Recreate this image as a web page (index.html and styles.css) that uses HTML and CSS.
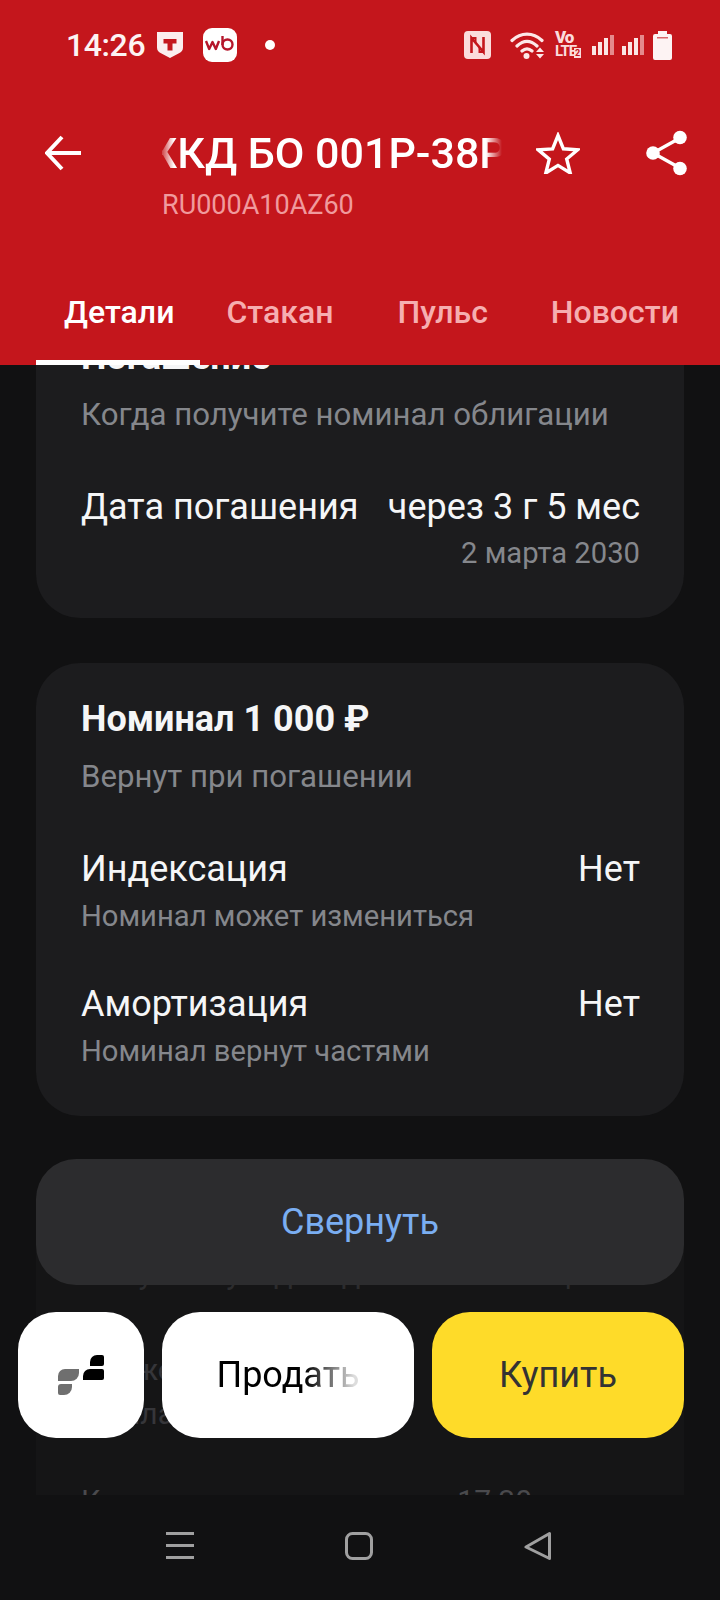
FILE: index.html
```html
<!DOCTYPE html>
<html lang="ru">
<head>
  <meta charset="UTF-8">
  <meta name="viewport" content="width=device-width, initial-scale=1.0">
  <title>ЖКД БО 001Р-38Р</title>
  <link rel="stylesheet" href="styles.css">
</head>
<body>
  <div class="phone">
    <header class="top">
      <div class="status">
        <span class="time">14:26</span>
        <svg class="ic-bank" width="26" height="26" viewBox="0 0 26 26"><path d="M0 0h26v15.500c0 3-1.500 4.500-4 5.700L13 26l-9-4.800C1.500 20 0 18.500 0 15.500z" fill="#fbeeee"/><path d="M6.500 7h13v4.500h-4v7h-5v-7h-4z" fill="#c4161c"/></svg>
        <svg class="ic-wb" width="34" height="34" viewBox="0 0 34 34"><rect width="34" height="34" rx="9" fill="#fff"/><path d="M3 13l3.200 8 3.300-7 3.300 7 3.200-8" fill="none" stroke="#b5162b" stroke-width="2.400" stroke-linejoin="round"/><circle cx="24.500" cy="16.500" r="5" fill="none" stroke="#b5162b" stroke-width="2.400"/><path d="M19.500 8v9" stroke="#b5162b" stroke-width="2.400"/></svg>
        <span class="dot"></span>
        <span class="status-right">
          <svg width="27" height="28" viewBox="0 0 27 28"><rect width="27" height="28" rx="4" fill="#fbdcdc"/><path d="M7.500 22V7l12 14V6" fill="none" stroke="#c4161c" stroke-width="2.600"/><path d="M7.500 7h4v5M19.500 21h-4v-5" fill="none" stroke="#c4161c" stroke-width="2"/></svg>
          <svg class="ic-wifi" width="34" height="28" viewBox="0 0 34 28"><path d="M2 9.500C11 1 23 1 32 9.500M7 15c6.500-6 13.500-6 20 0M12 20c3.500-3 6.500-3 10 0" fill="none" stroke="#fde8e8" stroke-width="3.200" stroke-linecap="round"/><circle cx="16.500" cy="25" r="3" fill="#fde8e8"/><path d="M26 21l4-4.500 4 4.500zM26 23h8l-4 4.500z" fill="#fde8e8"/></svg>
          <span class="volte"><b>Vo</b><br><span>LTE</span><i>2</i></span>
          <svg class="ic-signal" width="22" height="20" viewBox="0 0 22 20"><path d="M0 11h4v9H0zM6 7h4v13H6zM12 3h4v17h-4z" fill="#fbe6e6"/><path d="M18 0h4v20h-4z" fill="#e58a8d"/></svg>
          <svg class="ic-signal2" width="22" height="20" viewBox="0 0 22 20"><path d="M0 11h4v9H0zM6 7h4v13H6zM12 3h4v17h-4z" fill="#fbe6e6"/><path d="M18 0h4v20h-4z" fill="#e58a8d"/></svg>
          <svg class="ic-batt" width="19" height="29" viewBox="0 0 19 29"><path d="M5 0h9v3h3a2 2 0 0 1 2 2v22a2 2 0 0 1-2 2H2a2 2 0 0 1-2-2V5a2 2 0 0 1 2-2h3z" fill="#fdf3f3"/><path d="M4 6h11v1.500H4z" fill="#d9666a"/></svg>
        </span>
      </div>

      <div class="toolbar">
        <svg class="ic-back" width="36" height="36" viewBox="0 0 36 36"><path d="M17 2L2 18l15 16M2 18h34" fill="none" stroke="#fff" stroke-width="4"/></svg>
        <div class="titles">
          <div class="title-clip"><div class="title">ЖКД БО 001Р-38Р</div></div>
          <div class="isin">RU000A10AZ60</div>
        </div>
        <svg class="ic-star" width="44" height="42" viewBox="0 0 44 42"><path d="M22 3.500l5.400 13.300 14.300 1-11 9.200 3.500 13.900L22 33.400 9.800 41l3.500-13.900-11-9.200 14.300-1z" fill="none" stroke="#fff" stroke-width="3.400"/></svg>
        <svg class="ic-share" width="42" height="46" viewBox="0 0 42 46"><path d="M34 8L7 23l27 15" fill="none" stroke="#fff" stroke-width="3.400"/><circle cx="34" cy="7.500" r="6.800" fill="#fff"/><circle cx="7" cy="23" r="6.800" fill="#fff"/><circle cx="34" cy="38.500" r="6.800" fill="#fff"/></svg>
      </div>

      <nav class="tabs">
        <a class="tab active">Детали</a>
        <a class="tab">Стакан</a>
        <a class="tab">Пульс</a>
        <a class="tab">Новости</a>
        <span class="indicator"></span>
      </nav>
    </header>

    <main class="content">
      <section class="card first">
        <h2>Погашение</h2>
        <p class="hint">Когда получите номинал облигации</p>
        <div class="row">
          <span>Дата погашения</span>
          <span>через 3 г 5 мес</span>
        </div>
        <p class="hint small right">2 марта 2030</p>
      </section>

      <section class="card">
        <h2>Номинал 1 000 ₽</h2>
        <p class="hint">Вернут при погашении</p>
        <div class="row">
          <span>Индексация</span>
          <span>Нет</span>
        </div>
        <p class="hint small tight">Номинал может измениться</p>
        <div class="row">
          <span>Амортизация</span>
          <span>Нет</span>
        </div>
        <p class="hint small tight">Номинал вернут частями</p>
      </section>

      <section class="card ghost">
        <p class="ghost-lead">Получаемую доходность облигации</p>
        <p class="ghost-line">Снижение</p>
        <p class="ghost-line">Выплата</p>
        <div class="ghost-row"><span>Купить до</span><span>17:30</span></div>
      </section>

      <button class="collapse">Свернуть</button>

      <div class="actions">
        <button class="btn logo">
          <svg width="46" height="40" viewBox="0 0 46 40"><path d="M39 0h5a2 2 0 0 1 2 2v7a2 2 0 0 1-2 2h-12v-4a7 7 0 0 1 7-7z" fill="#000"/><path d="M32 14h12a2 2 0 0 1 2 2v7a2 2 0 0 1-2 2H25v-4a7 7 0 0 1 7-7z" fill="#000"/><path d="M7 14h14v4a8 8 0 0 1-8 8H0v-5a7 7 0 0 1 7-7z" fill="#6f6f6f"/><path d="M3 29h11v3a8 8 0 0 1-8 8H2a2 2 0 0 1-2-2v-6a3 3 0 0 1 3-3z" fill="#6f6f6f"/></svg>
        </button>
        <button class="btn sell"><span>Продать</span></button>
        <button class="btn buy">Купить</button>
      </div>
    </main>

    <footer class="navbar">
      <svg width="28" height="27" viewBox="0 0 28 27"><path d="M0 1.500h28M0 13.500h28M0 25.500h28" stroke="#a0a0a0" stroke-width="3"/></svg>
      <svg width="28" height="28" viewBox="0 0 28 28"><rect x="1.500" y="1.500" width="25" height="25" rx="6" fill="none" stroke="#a0a0a0" stroke-width="3"/></svg>
      <svg width="28" height="30" viewBox="0 0 28 30"><path d="M25.500 2.500v25L2 16z" fill="none" stroke="#a0a0a0" stroke-width="3" stroke-linejoin="round"/></svg>
    </footer>
  </div>
</body>
</html>
```

FILE: styles.css
```css
* {
  box-sizing: border-box;
}
body {
  margin: 0;
  background: #111112;
  font-family: Roboto, "Noto Sans", sans-serif;
  color: #f5f6f7;
}
.phone {
  width: 720px;
  height: 1600px;
  display: flex;
  flex-direction: column;
  overflow: hidden;
}

/* red header */
.top {
  height: 365px;
  flex: none;
  background: #c4161c;
  position: relative;
  z-index: 2;
  color: #fff;
}
.status {
  height: 90px;
  display: flex;
  align-items: center;
  padding-left: 66px;
}
.time {
  font-size: 32px;
  font-weight: 500;
  letter-spacing: -0.4px;
  width: 91px;
  color: #fdf3f3;
}
.ic-bank {
  margin-top: -1px;
}
.ic-wb {
  margin-left: 20px;
}
.dot {
  width: 10px;
  height: 10px;
  border-radius: 50%;
  background: #fff;
  margin-left: 28px;
}
.status-right {
  margin-left: auto;
  margin-right: 48px;
  display: flex;
  align-items: center;
}
.ic-wifi {
  margin-left: 19px;
}
.volte {
  margin-left: 11px;
  font-size: 15px;
  line-height: 13px;
  font-weight: 700;
  width: 28px;
  color: #fbdcdc;
  white-space: nowrap;
}
.volte span {
  display: inline-block;
  width: 19px;
  letter-spacing: -1px;
}
.volte b {
  font-size: 17px;
  letter-spacing: -1px;
}
.volte i {
  font-style: normal;
  font-size: 9px;
  background: #fbdcdc;
  color: #c4161c;
  padding: 0 1px;
}
.ic-signal {
  margin-left: 9px;
}
.ic-signal2 {
  margin-left: 8px;
}
.ic-batt {
  margin-left: 9px;
}

.toolbar {
  height: 165px;
  display: flex;
  align-items: flex-start;
  padding-left: 45px;
  padding-top: 40px;
}
.ic-back {
  margin-top: 5px;
}
.titles {
  width: 342px;
  margin-left: 81px;
  margin-top: -3px;
}
.title-clip {
  height: 52px;
  overflow: hidden;
  -webkit-mask-image: linear-gradient(90deg, rgba(0,0,0,0.2), #000 12px, #000 324px, transparent 340px);
  mask-image: linear-gradient(90deg, rgba(0,0,0,0.2), #000 12px, #000 324px, transparent 340px);
}
.title {
  font-size: 43px;
  line-height: 52px;
  font-weight: 500;
  white-space: nowrap;
  margin-left: -26px;
}
.isin {
  margin-top: 8px;
  font-size: 27px;
  line-height: 36px;
  color: #f09a9d;
}
.ic-star {
  margin-left: 32px;
  margin-top: 2px;
}
.ic-share {
  margin-left: 66px;
}

.tabs {
  position: relative;
  height: 110px;
  display: flex;
  padding-left: 64px;
  padding-top: 32px;
}
.tab {
  font-size: 32px;
  line-height: 50px;
  font-weight: 500;
  color: #f6aeb0;
}
.tab.active {
  color: #fff;
}
.tab:nth-child(2) {
  margin-left: 52px;
}
.tab:nth-child(3) {
  margin-left: 64px;
}
.tab:nth-child(4) {
  margin-left: 63px;
}
.indicator {
  position: absolute;
  left: 36px;
  bottom: 0;
  width: 164px;
  height: 5px;
  background: #fff;
}

/* scrolled content */
.content {
  flex: 1;
  position: relative;
  overflow: hidden;
  padding: 0 36px;
}
.card {
  background: #1c1c1e;
  border-radius: 44px;
  padding: 36px 44px 0 45px;
  margin-bottom: 45px;
  height: 453px;
}
.card.first {
  margin-top: -60px;
  height: 313px;
  padding-top: 32px;
}
h2 {
  margin: 0;
  font-size: 36px;
  line-height: 40px;
  font-weight: 700;
}
.hint {
  margin: 0;
  font-size: 31.2px;
  line-height: 36px;
  color: #85878c;
}
.hint.small {
  font-size: 29.2px;
}
h2 + .hint {
  margin-top: 20px;
}
.hint.right {
  text-align: right;
  margin-top: 8px;
}
.row {
  display: flex;
  justify-content: space-between;
  font-size: 36px;
  line-height: 40px;
  margin-top: 54px;
}
.hint.tight {
  margin-top: 9px;
}
.row + .hint.tight + .row {
  margin-top: 50px;
}

.card.ghost {
  height: 420px;
  background: #151516;
  padding-top: 95px;
  margin-bottom: 0;
}
.ghost-lead {
  margin: 0;
  font-size: 31px;
  line-height: 36px;
  color: #2c2c2e;
}
.ghost-line {
  margin: 0;
  font-size: 30px;
  line-height: 44px;
  color: #36363a;
}
.ghost-line:nth-child(2) {
  margin-top: 56px;
}
.ghost-row {
  display: flex;
  justify-content: space-between;
  font-size: 30px;
  line-height: 40px;
  margin-top: 45px;
  padding-right: 108px;
  color: #4a4a4d;
}

/* floating buttons */
.collapse {
  position: absolute;
  left: 36px;
  top: 794px;
  width: 648px;
  height: 126px;
  border: 0;
  border-radius: 40px;
  background: #2c2c2e;
  color: #7aaef2;
  font: 36px Roboto, sans-serif;
}
.actions {
  position: absolute;
  left: 18px;
  top: 947px;
  width: 666px;
  display: flex;
  gap: 18px;
}
.btn {
  height: 126px;
  border: 0;
  border-radius: 38px;
  font: 36px Roboto, sans-serif;
  color: #333;
}
.logo {
  flex: none;
  width: 126px;
  background: #fff;
  padding: 0;
  display: flex;
  align-items: center;
  justify-content: center;
}
.sell {
  flex: 1;
  background: #fff;
}
.sell span {
  background: linear-gradient(90deg, #000 62%, #ddd 96%);
  -webkit-background-clip: text;
  background-clip: text;
  color: transparent;
}
.buy {
  flex: 1;
  background: #fedb29;
}

.navbar {
  height: 105px;
  flex: none;
  background: #111112;
  display: flex;
  align-items: center;
  padding-left: 166px;
  padding-bottom: 4px;
  gap: 151px;
}
```
